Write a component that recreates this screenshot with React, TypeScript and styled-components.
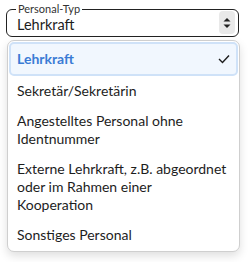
import * as React from "react";
import styled, { createGlobalStyle } from "styled-components";

const GlobalStyle = createGlobalStyle`
    body {
        margin: 0;
        background: #ffffff;
        font-family: "Lato", "Liberation Sans", sans-serif;
        color: #1d1d1d;
    }
`;

const Wrapper = styled.div`
    width: 248px;
    height: 262px;
    display: flex;
    flex-direction: column;
`;

const Field = styled.fieldset`
    margin: 3px 9px 0 6px;
    padding: 0 3px 2px 10px;
    border: 1px solid #222;
    border-radius: 6px;
    min-width: 0;
`;

const Legend = styled.legend`
    font-size: 11px;
    line-height: 12px;
    color: #333;
    padding: 0 2px;
    margin-left: -1px;
`;

const FieldRow = styled.div`
    margin-top: -4px;
    height: 23px;
    display: flex;
    align-items: center;
    justify-content: space-between;
`;

const Value = styled.span`
    font-size: 14.5px;
    padding-top: 3px;
`;

const Spinner = styled.div`
    width: 16px;
    height: 23px;
    border-radius: 4px;
    background: #e9e9e9;
    display: flex;
    align-items: center;
    justify-content: center;
`;

const Menu = styled.div`
    margin: 3px 8px 0 7px;
    padding: 1px;
    border: 1px solid #cfcfcf;
    border-radius: 7px;
    background: #fff;
    box-shadow: 0 4px 10px rgba(0, 0, 0, 0.13);
    display: flex;
    flex-direction: column;
`;

const Option = styled.div<{ $selected?: boolean }>`
    display: flex;
    align-items: center;
    justify-content: space-between;
    padding: ${p => (p.$selected ? "6px 6px 6px 6px" : "5px 7px 5px 7px")};
    font-size: 14px;
    line-height: 18px;
    border: ${p => (p.$selected ? "2px solid #cfe2f8" : "1px solid transparent")};
    border-radius: 5px;
    background: ${p => (p.$selected ? "#f1f7fe" : "transparent")};
    color: ${p => (p.$selected ? "#3a7bd5" : "#1d1d1d")};
    font-weight: ${p => (p.$selected ? 700 : 400)};
`;

const OPTIONS = [
    "Lehrkraft",
    "Sekretär/Sekretärin",
    "Angestelltes Personal ohne Identnummer",
    "Externe Lehrkraft, z.B. abgeordnet oder im Rahmen einer Kooperation",
    "Sonstiges Personal",
];

export default function App() {
    const selected = "Lehrkraft";
    return (
        <Wrapper>
            <GlobalStyle />
            <Field>
                <Legend>Personal-Typ</Legend>
                <FieldRow>
                    <Value>{selected}</Value>
                    <Spinner>
                        <svg width="8" height="12" viewBox="0 0 8 12">
                            <path d="M0.5 4.5 L4 1 L7.5 4.5 Z" fill="#222" />
                            <path d="M0.5 7.5 L4 11 L7.5 7.5 Z" fill="#222" />
                        </svg>
                    </Spinner>
                </FieldRow>
            </Field>
            <Menu>
                {OPTIONS.map(o => (
                    <Option key={o} $selected={o === selected}>
                        <span>{o}</span>
                        {o === selected && (
                            <svg width="12" height="10" viewBox="0 0 12 10">
                                <path d="M1 5 L4.5 8.5 L11 1.5" fill="none" stroke="#1d1d1d" strokeWidth="1.4" />
                            </svg>
                        )}
                    </Option>
                ))}
            </Menu>
        </Wrapper>
    );
}
